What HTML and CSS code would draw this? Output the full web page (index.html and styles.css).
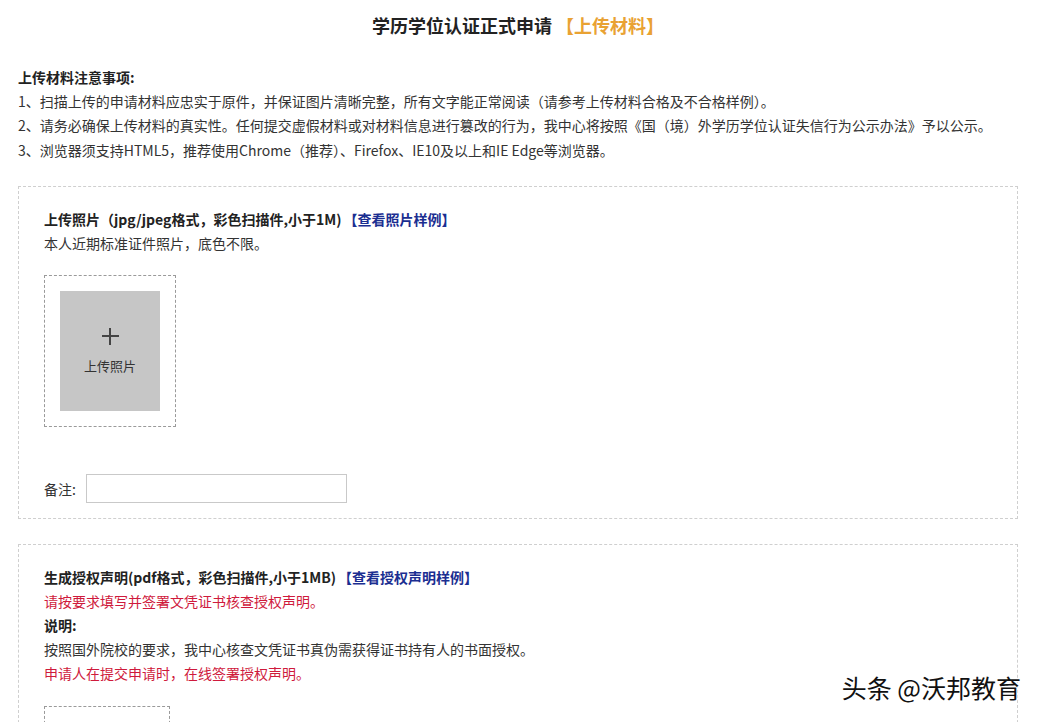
FILE: index.html
```html
<!DOCTYPE html>
<html lang="zh-CN">
<head>
<meta charset="utf-8">
<title>学历学位认证正式申请</title>
<link rel="stylesheet" href="styles.css">
</head>
<body>
<div class="page">
  <h1 class="title">学历学位认证正式申请<span class="title-tag">【上传材料】</span></h1>

  <div class="notice">
    <div class="notice-head">上传材料注意事项:</div>
    <div class="notice-line">1、扫描上传的申请材料应忠实于原件，并保证图片清晰完整，所有文字能正常阅读（请参考上传材料合格及不合格样例）。</div>
    <div class="notice-line">2、请务必确保上传材料的真实性。任何提交虚假材料或对材料信息进行篡改的行为，我中心将按照《国（境）外学历学位认证失信行为公示办法》予以公示。</div>
    <div class="notice-line">3、浏览器须支持HTML5，推荐使用Chrome（推荐）、Firefox、IE10及以上和IE Edge等浏览器。</div>
  </div>

  <section class="box">
    <div class="box-title">上传照片（jpg/jpeg格式，彩色扫描件,小于1M)<a class="sample-link">【查看照片样例】</a></div>
    <div class="line">本人近期标准证件照片，底色不限。</div>
    <div class="upload">
      <div class="upload-inner">
        <span class="plus"></span>
        <span class="upload-text">上传照片</span>
      </div>
    </div>
    <div class="remark">
      <label class="remark-label">备注:</label>
      <input class="remark-input" type="text">
    </div>
  </section>

  <section class="box box-second">
    <div class="box-title">生成授权声明(pdf格式，彩色扫描件,小于1MB)<a class="sample-link">【查看授权声明样例】</a></div>
    <div class="line red">请按要求填写并签署文凭证书核查授权声明。</div>
    <div class="line bold">说明:</div>
    <div class="line">按照国外院校的要求，我中心核查文凭证书真伪需获得证书持有人的书面授权。</div>
    <div class="line red">申请人在提交申请时，在线签署授权声明。</div>
    <div class="upload upload-small"></div>
  </section>
</div>
<div class="watermark">头条 @沃邦教育</div>
</body>
</html>
```

FILE: styles.css
```css
html, body {
  margin: 0;
  padding: 0;
  background: #fff;
}

body {
  font-family: "Noto Sans CJK SC", "Noto Sans", sans-serif;
  font-size: 14px;
  color: #333;
  width: 1042px;
  height: 722px;
  overflow: hidden;
  position: relative;
}

.page {
  padding: 10px 24px 0 18px;
}

.title {
  margin: 0;
  text-align: center;
  font-size: 18px;
  line-height: 30px;
  font-weight: 700;
  color: #222;
}

.title-tag {
  color: #e9a233;
  margin-left: 4px;
}

.notice {
  margin-top: 25px;
}

.notice-head {
  font-weight: 700;
  line-height: 24px;
  color: #222;
}

.notice-line {
  line-height: 24.4px;
}

.box {
  margin-top: 24px;
  border: 1px dashed #cfcfcf;
  padding: 20px 25px 15px;
}

.box-second {
  margin-top: 25px;
}

.box-title {
  font-weight: 700;
  line-height: 24px;
  color: #222;
}

.sample-link {
  color: #1b2e91;
  font-weight: 700;
  margin-left: 2px;
}

.line {
  line-height: 24px;
}

.line.red {
  color: #cf1a3c;
}

.line.bold {
  font-weight: 700;
  color: #222;
}

.upload {
  margin-top: 20px;
  width: 100px;
  padding: 15px;
  border: 1px dashed #9a9a9a;
}

.upload-inner {
  height: 120px;
  background: #c6c6c6;
  display: flex;
  flex-direction: column;
  align-items: center;
  justify-content: center;
  gap: 12px;
}

.plus {
  position: relative;
  width: 17px;
  height: 17px;
  display: block;
}

.plus::before,
.plus::after {
  content: "";
  position: absolute;
  background: #444;
}

.plus::before {
  left: 0;
  right: 0;
  top: 7.5px;
  height: 2px;
}

.plus::after {
  top: 0;
  bottom: 0;
  left: 7.5px;
  width: 2px;
}

.upload-text {
  font-size: 13px;
  line-height: 18px;
  color: #333;
}

.upload-small {
  margin-top: 21px;
  height: 120px;
  width: 94px;
}

.remark {
  margin-top: 47px;
  display: flex;
  align-items: center;
  gap: 10px;
}

.remark-label {
  font-size: 14px;
  color: #333;
}

.remark-input {
  width: 257px;
  height: 25px;
  border: 1px solid #c9c9c9;
  padding: 1px;
  margin: 0;
  background: #fff;
}

.watermark {
  position: absolute;
  right: 21px;
  top: 671px;
  font-size: 25px;
  line-height: 32px;
  color: #111;
  text-shadow: 0 0 2px #fff, 1px 1px 0 #fff, -1px -1px 0 #fff;
}
```
